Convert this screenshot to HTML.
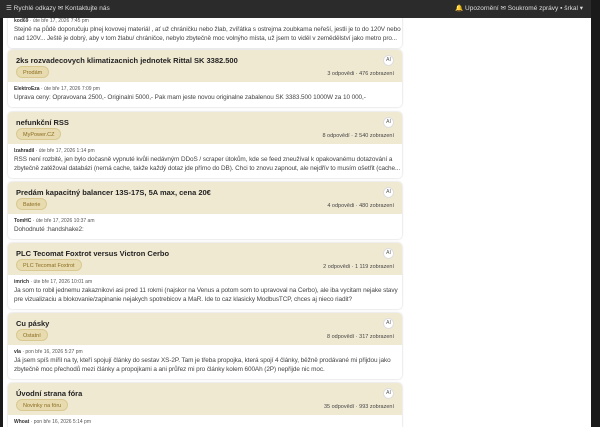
<!DOCTYPE html>
<html><head><meta charset="utf-8"><style>
*{box-sizing:border-box;margin:0;padding:0}
body{width:600px;height:427px;overflow:hidden;background:#1a1a1a;font-family:"Liberation Sans",sans-serif;position:relative}
.nav{position:absolute;left:0;top:0;width:591px;height:18px;background:#2b2b2b;color:#ddd;font-size:6.5px;line-height:18px;padding:0 6px}
.nav .r{position:absolute;right:8px;top:0}
.wrap{position:absolute;left:3px;top:18px;width:588px;height:409px;background:#fff;overflow:hidden}
.card{position:absolute;left:5px;width:394px;border-radius:4px;box-shadow:0 0 2px rgba(0,0,0,.2);background:#fff;overflow:hidden}
.hd{background:#f0e9d2;height:32px;position:relative;padding:6px 8px}
.t{font-size:7.5px;font-weight:bold;color:#222}
.b{position:absolute;left:8px;top:16px;height:12px;line-height:12px;padding:0 6px;border-radius:6px;background:#e8dbb0;border:1px solid #d9c990;font-size:5.5px;color:#8a6d20}
.ai{position:absolute;right:8px;top:5px;width:11px;height:11px;border-radius:50%;background:#fff;border:1px solid #ddd;font-size:5px;text-align:center;line-height:9px;color:#555}
.st{position:absolute;right:8px;top:21px;font-size:5.5px;color:#444}
.bd{padding:4px 6px 5px;font-size:6.4px;letter-spacing:-0.08px;color:#444;line-height:9px;white-space:nowrap}
.m{font-size:5px;color:#555;line-height:7px;letter-spacing:0}
.m b{color:#333}
</style></head><body>
<div class="nav">☰ Rychlé odkazy ✉ Kontaktujte nás<span class="r">🔔 Upozornění ✉ Soukromé zprávy ▪ šrkal ▾</span></div>
<div class="wrap">
<div class="card" style="top:-10px"><div class="bd" style="padding-top:10px"><div class="m"><b>kod69</b> · úte bře 17, 2026 7:45 pm</div>Stejně na půdě doporučuju plnej kovovej materiál , ať už chráničku nebo žlab, zvířátka s ostrejma zoubkama neřeší, jestli je to do 120V nebo<br>nad 120V... Ještě je dobrý, aby v tom žlabu/ chráničce, nebylo zbytečně moc volnýho místa, už jsem to viděl v zemědělství jako metro pro...</div></div>
<div class="card" style="top:32px"><div class="hd"><div class="t">2ks rozvadecovych klimatizacnich jednotek Rittal SK 3382.500</div><span class="b">Prodám</span><span class="ai">AI</span><span class="st">3 odpovědi · 476 zobrazení</span></div><div class="bd"><div class="m"><b>ElektroEza</b> · úte bře 17, 2026 7:09 pm</div>Uprava ceny: Opravovana 2500,- Originalni 5000,- Pak mam jeste novou originalne zabalenou SK 3383.500 1000W za 10 000,-</div></div>
<div class="card" style="top:94px"><div class="hd"><div class="t">nefunkční RSS</div><span class="b">MyPower.CZ</span><span class="ai">AI</span><span class="st">8 odpovědí · 2 540 zobrazení</span></div><div class="bd"><div class="m"><b>lzahradil</b> · úte bře 17, 2026 1:14 pm</div>RSS není rozbité, jen bylo dočasně vypnuté kvůli nedávným DDoS / scraper útokům, kde se feed zneužíval k opakovanému dotazování a<br>zbytečně zatěžoval databázi (nemá cache, takže každý dotaz jde přímo do DB). Chci to znovu zapnout, ale nejdřív to musím ošetřit (cache...</div></div>
<div class="card" style="top:164px"><div class="hd"><div class="t">Predám kapacitný balancer 13S-17S, 5A max, cena 20€</div><span class="b">Baterie</span><span class="ai">AI</span><span class="st">4 odpovědi · 480 zobrazení</span></div><div class="bd"><div class="m"><b>TomHC</b> · úte bře 17, 2026 10:37 am</div>Dohodnuté :handshake2:</div></div>
<div class="card" style="top:225px"><div class="hd"><div class="t">PLC Tecomat Foxtrot versus Victron Cerbo</div><span class="b">PLC Tecomat Foxtrot</span><span class="ai">AI</span><span class="st">2 odpovědi · 1 119 zobrazení</span></div><div class="bd"><div class="m"><b>imrich</b> · úte bře 17, 2026 10:01 am</div>Ja som to robil jednemu zakaznikovi asi pred 11 rokmi (najskor na Venus a potom som to upravoval na Cerbo), ale iba vycitam nejake stavy<br>pre vizualizaciu a blokovanie/zapinanie nejakych spotrebicov a MaR. Ide to caz klasicky ModbusTCP, chces aj nieco riadit?</div></div>
<div class="card" style="top:295px"><div class="hd"><div class="t">Cu pásky</div><span class="b">Ostatní</span><span class="ai">AI</span><span class="st">8 odpovědí · 317 zobrazení</span></div><div class="bd"><div class="m"><b>vla</b> · pon bře 16, 2026 5:27 pm</div>Já jsem spíš mířil na ty, kteří spojují články do sestav XS-2P. Tam je třeba propojka, která spojí 4 články, běžně prodávané mi přijdou jako<br>zbytečně moc přechodů mezi články a propojkami a ani průřez mi pro články kolem 600Ah (2P) nepřijde nic moc.</div></div>
<div class="card" style="top:365px"><div class="hd"><div class="t">Úvodní strana fóra</div><span class="b">Novinky na fóru</span><span class="ai">AI</span><span class="st">35 odpovědí · 993 zobrazení</span></div><div class="bd"><div class="m"><b>Whoat</b> · pon bře 16, 2026 5:14 pm</div></div></div>
</div>
</body></html>
